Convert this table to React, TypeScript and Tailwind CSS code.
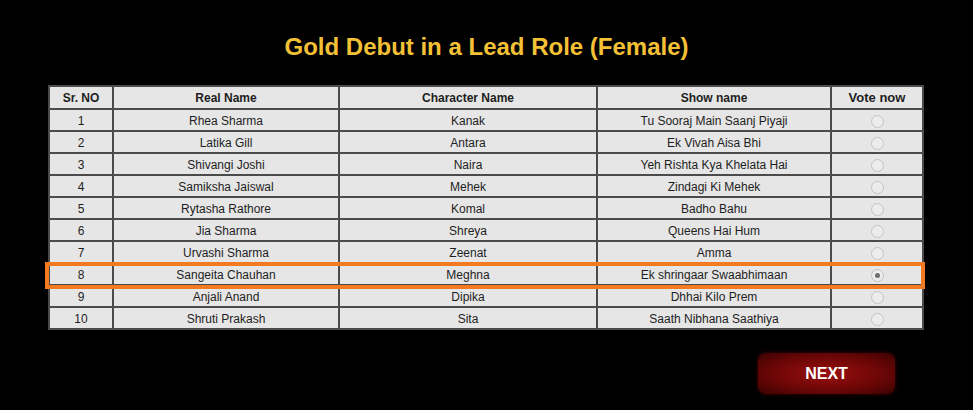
import React from 'react';

const rows = [
  { no: 1, real: 'Rhea Sharma', character: 'Kanak', show: 'Tu Sooraj Main Saanj Piyaji' },
  { no: 2, real: 'Latika Gill', character: 'Antara', show: 'Ek Vivah Aisa Bhi' },
  { no: 3, real: 'Shivangi Joshi', character: 'Naira', show: 'Yeh Rishta Kya Khelata Hai' },
  { no: 4, real: 'Samiksha Jaiswal', character: 'Mehek', show: 'Zindagi Ki Mehek' },
  { no: 5, real: 'Rytasha Rathore', character: 'Komal', show: 'Badho Bahu' },
  { no: 6, real: 'Jia Sharma', character: 'Shreya', show: 'Queens Hai Hum' },
  { no: 7, real: 'Urvashi Sharma', character: 'Zeenat', show: 'Amma' },
  { no: 8, real: 'Sangeita Chauhan', character: 'Meghna', show: 'Ek shringaar Swaabhimaan' },
  { no: 9, real: 'Anjali Anand', character: 'Dipika', show: 'Dhhai Kilo Prem' },
  { no: 10, real: 'Shruti Prakash', character: 'Sita', show: 'Saath Nibhana Saathiya' },
];

function Radio({ checked }: { checked: boolean }) {
  return (
    <span className="inline-flex w-[13px] h-[13px] rounded-full border border-[#c4c4c4] bg-[#ececec] items-center justify-center align-middle">
      {checked && <span className="w-[5px] h-[5px] rounded-full bg-[#6f6f6f]" />}
    </span>
  );
}

export default function App() {
  const selected = 8;
  const cell = 'border-2 border-[#4b4b4b] text-center px-1';

  return (
    <div className="w-[973px] h-[410px] bg-black overflow-hidden [font-family:'Liberation_Sans',Arial,sans-serif]">
      <h1 className="text-center text-[24px] font-bold text-[#f4c136] pt-[33px] leading-[28px]">
        Gold Debut in a Lead Role (Female)
      </h1>

      <div className="relative mt-[24px] ml-[48px] w-[874px]">
        <table className="w-[874px] border-collapse border-2 border-[#6e6e6e] bg-[#e6e6e6] text-[12px] text-[#1e1e1e] table-fixed">
          <colgroup>
            <col className="w-[64px]" />
            <col className="w-[226px]" />
            <col className="w-[258px]" />
            <col className="w-[234px]" />
            <col className="w-[92px]" />
          </colgroup>
          <thead>
            <tr className="h-[23px] font-bold">
              <th className={cell}>Sr. NO</th>
              <th className={cell}>Real Name</th>
              <th className={cell}>Character Name</th>
              <th className={cell}>Show name</th>
              <th className={cell + ' text-[13px]'}>Vote now</th>
            </tr>
          </thead>
          <tbody>
            {rows.map((r) => (
              <tr key={r.no} className="h-[22px]">
                <td className={cell + ' pt-[1px]'}>{r.no}</td>
                <td className={cell + ' pt-[1px]'}>{r.real}</td>
                <td className={cell + ' pt-[1px]'}>{r.character}</td>
                <td className={cell + ' pt-[1px]'}>{r.show}</td>
                <td className={cell + ' pt-[1px]'}>
                  <Radio checked={r.no === selected} />
                </td>
              </tr>
            ))}
          </tbody>
        </table>
        <div className="absolute left-[-3px] top-[177px] w-[880px] h-[27px] border-[4px] border-[#f47a21] pointer-events-none" />
      </div>

      <div className="flex justify-end pr-[78px] mt-[23px]">
        <button className="w-[137px] h-[41px] rounded-[8px] bg-[radial-gradient(ellipse_at_center,#9c0f0f_0%,#6a0606_60%,#3a0202_100%)] text-white font-bold text-[16px] shadow-[0_0_4px_#400]">
          NEXT
        </button>
      </div>
    </div>
  );
}
